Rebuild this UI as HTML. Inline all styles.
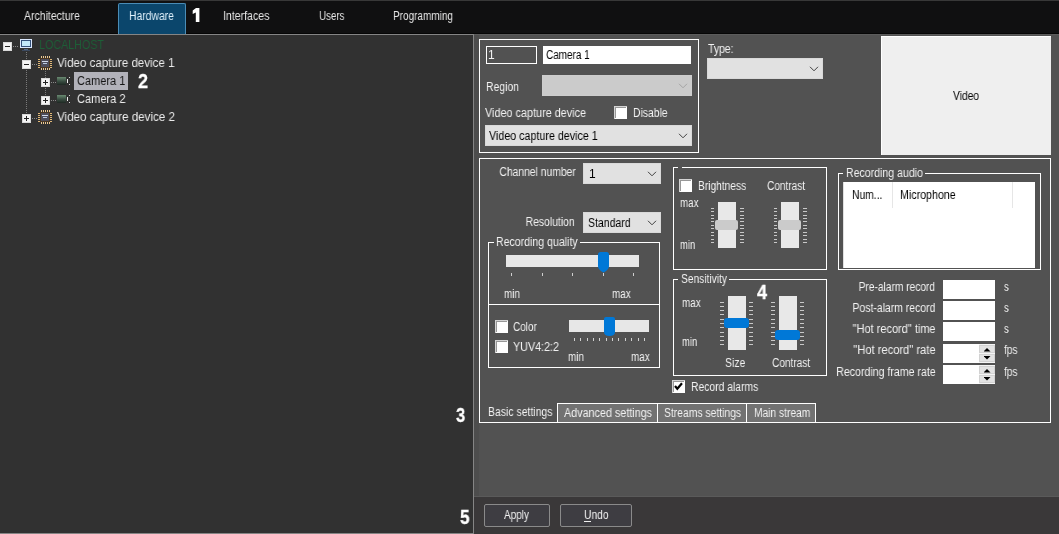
<!DOCTYPE html><html><head><meta charset="utf-8"><style>html,body{margin:0;padding:0;width:1059px;height:534px;overflow:hidden;background:#525252;}body{position:relative;font-family:"Liberation Sans",sans-serif;}.a{position:absolute;}.t{position:absolute;white-space:pre;will-change:transform;}</style></head><body><div class="a" style="left:0px;top:0px;width:1059px;height:1px;background:#383838;"></div>
<div class="a" style="left:0px;top:1px;width:1059px;height:33px;background:#101011;"></div>
<div class="a" style="left:0px;top:33px;width:1059px;height:1px;background:#060606;"></div>
<div class="a" style="left:0px;top:34px;width:474px;height:500px;background:#858585;"></div>
<div class="a" style="left:0px;top:35px;width:473px;height:498px;background:#313131;"></div>
<div class="a" style="left:474px;top:34px;width:585px;height:462px;background:#525252;"></div>
<div class="a" style="left:474px;top:34px;width:585px;height:1px;background:#5c5c5c;"></div>
<div class="a" style="left:474px;top:35px;width:5px;height:461px;background:#4d4d4d;"></div>
<div class="a" style="left:474px;top:496px;width:585px;height:38px;background:#3a3839;"></div>
<div class="a" style="left:118px;top:3px;width:68px;height:31px;background:#0b466c;border:1px solid #4a8cb6;border-bottom:none;box-sizing:border-box;border-radius:2px 2px 0 0;"></div>
<div class="t" style="top:10px;font-size:12px;line-height:12px;color:#e6e6e6;left:24.00px;transform:scaleX(0.8747);transform-origin:0 0;">Architecture</div>
<div class="t" style="top:10px;font-size:12px;line-height:12px;color:#dff0fb;left:129.30px;transform:scaleX(0.8651);transform-origin:0 0;">Hardware</div>
<div class="t" style="top:10px;font-size:12px;line-height:12px;color:#e6e6e6;left:223.00px;transform:scaleX(0.8806);transform-origin:0 0;">Interfaces</div>
<div class="t" style="top:10px;font-size:12px;line-height:12px;color:#e6e6e6;left:318.60px;transform:scaleX(0.8139);transform-origin:0 0;">Users</div>
<div class="t" style="top:10px;font-size:12px;line-height:12px;color:#e6e6e6;left:393.30px;transform:scaleX(0.8331);transform-origin:0 0;">Programming</div>
<svg class="a" style="left:3px;top:42px" width="9" height="9" viewBox="0 0 9 9" shape-rendering="crispEdges"><rect x="0" y="0" width="9" height="9" fill="#d9d9d9"/><rect x="1" y="1" width="7" height="7" fill="#f4f4f4"/><rect x="2" y="4" width="5" height="1" fill="#222"/></svg>
<svg class="a" style="left:13px;top:46px" width="6" height="1" viewBox="0 0 6 1" shape-rendering="crispEdges"><rect x="0" y="0" width="1" height="1" fill="#8a8a8a"/><rect x="2" y="0" width="1" height="1" fill="#8a8a8a"/><rect x="4" y="0" width="1" height="1" fill="#8a8a8a"/></svg>
<svg class="a" style="left:20px;top:39px" width="12" height="12" viewBox="0 0 12 12" shape-rendering="crispEdges"><rect x="0" y="0" width="12" height="9" fill="#dbe9ff"/><rect x="1" y="1" width="10" height="7" fill="#33507a"/><rect x="2" y="2" width="8" height="5" fill="#c2e8fa"/><rect x="4" y="10" width="4" height="1" fill="#556a88"/><rect x="2" y="11" width="8" height="1" fill="#3c4a60"/></svg>
<svg class="a" style="left:26px;top:52px" width="1" height="8" viewBox="0 0 1 8" shape-rendering="crispEdges"><rect x="0" y="0" width="1" height="1" fill="#7a7a7a"/><rect x="0" y="2" width="1" height="1" fill="#7a7a7a"/><rect x="0" y="4" width="1" height="1" fill="#7a7a7a"/><rect x="0" y="6" width="1" height="1" fill="#7a7a7a"/></svg>
<svg class="a" style="left:26px;top:70px" width="1" height="44" viewBox="0 0 1 44" shape-rendering="crispEdges"><rect x="0" y="0" width="1" height="1" fill="#7a7a7a"/><rect x="0" y="2" width="1" height="1" fill="#7a7a7a"/><rect x="0" y="4" width="1" height="1" fill="#7a7a7a"/><rect x="0" y="6" width="1" height="1" fill="#7a7a7a"/><rect x="0" y="8" width="1" height="1" fill="#7a7a7a"/><rect x="0" y="10" width="1" height="1" fill="#7a7a7a"/><rect x="0" y="12" width="1" height="1" fill="#7a7a7a"/><rect x="0" y="14" width="1" height="1" fill="#7a7a7a"/><rect x="0" y="16" width="1" height="1" fill="#7a7a7a"/><rect x="0" y="18" width="1" height="1" fill="#7a7a7a"/><rect x="0" y="20" width="1" height="1" fill="#7a7a7a"/><rect x="0" y="22" width="1" height="1" fill="#7a7a7a"/><rect x="0" y="24" width="1" height="1" fill="#7a7a7a"/><rect x="0" y="26" width="1" height="1" fill="#7a7a7a"/><rect x="0" y="28" width="1" height="1" fill="#7a7a7a"/><rect x="0" y="30" width="1" height="1" fill="#7a7a7a"/><rect x="0" y="32" width="1" height="1" fill="#7a7a7a"/><rect x="0" y="34" width="1" height="1" fill="#7a7a7a"/><rect x="0" y="36" width="1" height="1" fill="#7a7a7a"/><rect x="0" y="38" width="1" height="1" fill="#7a7a7a"/><rect x="0" y="40" width="1" height="1" fill="#7a7a7a"/><rect x="0" y="42" width="1" height="1" fill="#7a7a7a"/></svg>
<svg class="a" style="left:22px;top:60px" width="9" height="9" viewBox="0 0 9 9" shape-rendering="crispEdges"><rect x="0" y="0" width="9" height="9" fill="#d9d9d9"/><rect x="1" y="1" width="7" height="7" fill="#f4f4f4"/><rect x="2" y="4" width="5" height="1" fill="#222"/></svg>
<svg class="a" style="left:32px;top:64px" width="6" height="1" viewBox="0 0 6 1" shape-rendering="crispEdges"><rect x="0" y="0" width="1" height="1" fill="#8a8a8a"/><rect x="2" y="0" width="1" height="1" fill="#8a8a8a"/><rect x="4" y="0" width="1" height="1" fill="#8a8a8a"/></svg>
<svg class="a" style="left:38px;top:56px" width="14" height="14" viewBox="0 0 14 14" shape-rendering="crispEdges"><rect x="3" y="0" width="1" height="2" fill="#ecc890"/><rect x="3" y="12" width="1" height="2" fill="#ecc890"/><rect x="5" y="0" width="1" height="2" fill="#ecc890"/><rect x="5" y="12" width="1" height="2" fill="#ecc890"/><rect x="7" y="0" width="1" height="2" fill="#ecc890"/><rect x="7" y="12" width="1" height="2" fill="#ecc890"/><rect x="9" y="0" width="1" height="2" fill="#ecc890"/><rect x="9" y="12" width="1" height="2" fill="#ecc890"/><rect x="11" y="0" width="1" height="2" fill="#ecc890"/><rect x="11" y="12" width="1" height="2" fill="#ecc890"/><rect x="0" y="3" width="2" height="1" fill="#e0b878"/><rect x="12" y="3" width="2" height="1" fill="#e0b878"/><rect x="0" y="5" width="2" height="1" fill="#e0b878"/><rect x="12" y="5" width="2" height="1" fill="#e0b878"/><rect x="0" y="7" width="2" height="1" fill="#e0b878"/><rect x="12" y="7" width="2" height="1" fill="#e0b878"/><rect x="0" y="9" width="2" height="1" fill="#e0b878"/><rect x="12" y="9" width="2" height="1" fill="#e0b878"/><rect x="0" y="11" width="2" height="1" fill="#e0b878"/><rect x="12" y="11" width="2" height="1" fill="#e0b878"/><rect x="2" y="2" width="10" height="10" fill="#4a3620"/><rect x="3" y="3" width="8" height="8" fill="#4c4c5a"/><rect x="4" y="5" width="6" height="1" fill="#d0d8e8"/><rect x="5" y="7" width="4" height="1" fill="#b8c8e0"/></svg>
<svg class="a" style="left:45px;top:71px" width="1" height="7" viewBox="0 0 1 7" shape-rendering="crispEdges"><rect x="0" y="0" width="1" height="1" fill="#7a7a7a"/><rect x="0" y="2" width="1" height="1" fill="#7a7a7a"/><rect x="0" y="4" width="1" height="1" fill="#7a7a7a"/><rect x="0" y="6" width="1" height="1" fill="#7a7a7a"/></svg>
<svg class="a" style="left:45px;top:88px" width="1" height="8" viewBox="0 0 1 8" shape-rendering="crispEdges"><rect x="0" y="0" width="1" height="1" fill="#7a7a7a"/><rect x="0" y="2" width="1" height="1" fill="#7a7a7a"/><rect x="0" y="4" width="1" height="1" fill="#7a7a7a"/><rect x="0" y="6" width="1" height="1" fill="#7a7a7a"/></svg>
<svg class="a" style="left:41px;top:78px" width="9" height="9" viewBox="0 0 9 9" shape-rendering="crispEdges"><rect x="0" y="0" width="9" height="9" fill="#d9d9d9"/><rect x="1" y="1" width="7" height="7" fill="#f4f4f4"/><rect x="2" y="4" width="5" height="1" fill="#222"/><rect x="4" y="2" width="1" height="5" fill="#222"/></svg>
<svg class="a" style="left:51px;top:82px" width="6" height="1" viewBox="0 0 6 1" shape-rendering="crispEdges"><rect x="0" y="0" width="1" height="1" fill="#8a8a8a"/><rect x="2" y="0" width="1" height="1" fill="#8a8a8a"/><rect x="4" y="0" width="1" height="1" fill="#8a8a8a"/></svg>
<svg class="a" style="left:57px;top:77px" width="13" height="8" viewBox="0 0 13 8" shape-rendering="crispEdges"><defs><linearGradient id="cg" x1="0" y1="0" x2="0" y2="1"><stop offset="0" stop-color="#6a8a72"/><stop offset="0.5" stop-color="#3c5044"/><stop offset="1" stop-color="#1e2822"/></linearGradient></defs><rect x="0" y="0" width="9" height="8" fill="url(#cg)"/><rect x="10" y="2" width="1" height="4" fill="#f0f0f0"/><rect x="12" y="0" width="1" height="1" fill="#d0d0d0"/><rect x="12" y="7" width="1" height="1" fill="#d0d0d0"/></svg>
<svg class="a" style="left:41px;top:96px" width="9" height="9" viewBox="0 0 9 9" shape-rendering="crispEdges"><rect x="0" y="0" width="9" height="9" fill="#d9d9d9"/><rect x="1" y="1" width="7" height="7" fill="#f4f4f4"/><rect x="2" y="4" width="5" height="1" fill="#222"/><rect x="4" y="2" width="1" height="5" fill="#222"/></svg>
<svg class="a" style="left:51px;top:100px" width="6" height="1" viewBox="0 0 6 1" shape-rendering="crispEdges"><rect x="0" y="0" width="1" height="1" fill="#8a8a8a"/><rect x="2" y="0" width="1" height="1" fill="#8a8a8a"/><rect x="4" y="0" width="1" height="1" fill="#8a8a8a"/></svg>
<svg class="a" style="left:57px;top:95px" width="13" height="8" viewBox="0 0 13 8" shape-rendering="crispEdges"><defs><linearGradient id="cg" x1="0" y1="0" x2="0" y2="1"><stop offset="0" stop-color="#6a8a72"/><stop offset="0.5" stop-color="#3c5044"/><stop offset="1" stop-color="#1e2822"/></linearGradient></defs><rect x="0" y="0" width="9" height="8" fill="url(#cg)"/><rect x="10" y="2" width="1" height="4" fill="#f0f0f0"/><rect x="12" y="0" width="1" height="1" fill="#d0d0d0"/><rect x="12" y="7" width="1" height="1" fill="#d0d0d0"/></svg>
<svg class="a" style="left:22px;top:114px" width="9" height="9" viewBox="0 0 9 9" shape-rendering="crispEdges"><rect x="0" y="0" width="9" height="9" fill="#d9d9d9"/><rect x="1" y="1" width="7" height="7" fill="#f4f4f4"/><rect x="2" y="4" width="5" height="1" fill="#222"/><rect x="4" y="2" width="1" height="5" fill="#222"/></svg>
<svg class="a" style="left:32px;top:118px" width="6" height="1" viewBox="0 0 6 1" shape-rendering="crispEdges"><rect x="0" y="0" width="1" height="1" fill="#8a8a8a"/><rect x="2" y="0" width="1" height="1" fill="#8a8a8a"/><rect x="4" y="0" width="1" height="1" fill="#8a8a8a"/></svg>
<svg class="a" style="left:38px;top:110px" width="14" height="14" viewBox="0 0 14 14" shape-rendering="crispEdges"><rect x="3" y="0" width="1" height="2" fill="#ecc890"/><rect x="3" y="12" width="1" height="2" fill="#ecc890"/><rect x="5" y="0" width="1" height="2" fill="#ecc890"/><rect x="5" y="12" width="1" height="2" fill="#ecc890"/><rect x="7" y="0" width="1" height="2" fill="#ecc890"/><rect x="7" y="12" width="1" height="2" fill="#ecc890"/><rect x="9" y="0" width="1" height="2" fill="#ecc890"/><rect x="9" y="12" width="1" height="2" fill="#ecc890"/><rect x="11" y="0" width="1" height="2" fill="#ecc890"/><rect x="11" y="12" width="1" height="2" fill="#ecc890"/><rect x="0" y="3" width="2" height="1" fill="#e0b878"/><rect x="12" y="3" width="2" height="1" fill="#e0b878"/><rect x="0" y="5" width="2" height="1" fill="#e0b878"/><rect x="12" y="5" width="2" height="1" fill="#e0b878"/><rect x="0" y="7" width="2" height="1" fill="#e0b878"/><rect x="12" y="7" width="2" height="1" fill="#e0b878"/><rect x="0" y="9" width="2" height="1" fill="#e0b878"/><rect x="12" y="9" width="2" height="1" fill="#e0b878"/><rect x="0" y="11" width="2" height="1" fill="#e0b878"/><rect x="12" y="11" width="2" height="1" fill="#e0b878"/><rect x="2" y="2" width="10" height="10" fill="#4a3620"/><rect x="3" y="3" width="8" height="8" fill="#4c4c5a"/><rect x="4" y="5" width="6" height="1" fill="#d0d8e8"/><rect x="5" y="7" width="4" height="1" fill="#b8c8e0"/></svg>
<div class="a" style="left:74px;top:72px;width:54px;height:18px;background:#b2b2ba;"></div>
<div class="t" style="top:39px;font-size:12.5px;line-height:12.5px;color:#1e5e37;left:38.70px;transform:scaleX(0.8585);transform-origin:0 0;">LOCALHOST</div>
<div class="t" style="top:57px;font-size:12.5px;line-height:12.5px;color:#ececec;left:57.00px;transform:scaleX(0.9257);transform-origin:0 0;">Video capture device 1</div>
<div class="t" style="top:75px;font-size:12.5px;line-height:12.5px;color:#141414;left:76.80px;transform:scaleX(0.8800);transform-origin:0 0;">Camera 1</div>
<div class="t" style="top:93px;font-size:12.5px;line-height:12.5px;color:#ececec;left:76.80px;transform:scaleX(0.8836);transform-origin:0 0;">Camera 2</div>
<div class="t" style="top:111px;font-size:12.5px;line-height:12.5px;color:#ececec;left:57.00px;transform:scaleX(0.9296);transform-origin:0 0;">Video capture device 2</div>
<div class="t" style="top:71px;font-size:20px;line-height:20px;color:#ffffff;font-weight:bold;left:138.00px;transform:scaleX(0.8993);transform-origin:0 0;-webkit-text-stroke:0.3px #fff;">2</div>
<div class="a" style="left:479px;top:39px;width:220px;height:1px;background:#ffffff;"></div>
<div class="a" style="left:479px;top:152px;width:220px;height:1px;background:#ffffff;"></div>
<div class="a" style="left:479px;top:39px;width:1px;height:114px;background:#ffffff;"></div>
<div class="a" style="left:698px;top:39px;width:1px;height:114px;background:#ffffff;"></div>
<div class="a" style="left:486px;top:46px;width:51px;height:18px;box-sizing:border-box;border:1px solid #ffffff;"></div>
<div class="a" style="left:543px;top:46px;width:148px;height:18px;background:#ffffff;"></div>
<div class="t" style="top:49px;font-size:12px;line-height:12px;color:#f2f2f2;left:488.00px;">1</div>
<div class="t" style="top:49px;font-size:12px;line-height:12px;color:#000000;left:545.50px;transform:scaleX(0.8293);transform-origin:0 0;">Camera 1</div>
<div class="t" style="top:81px;font-size:12px;line-height:12px;color:#f2f2f2;left:485.70px;transform:scaleX(0.8678);transform-origin:0 0;">Region</div>
<div class="a" style="left:542px;top:75px;width:150px;height:21px;background:#cbcbcb;box-sizing:border-box;border:1px solid #cdcdcd;"></div>
<svg class="a" style="left:678px;top:83px" width="10" height="6" viewBox="0 0 10 6"><polyline points="1,0.8 5,4.8 9,0.8" fill="none" stroke="#a4a4a4" stroke-width="1.0"/></svg>
<div class="t" style="top:107px;font-size:12px;line-height:12px;color:#f2f2f2;left:485.20px;transform:scaleX(0.9030);transform-origin:0 0;">Video capture device</div>
<svg class="a" style="left:614px;top:106px" width="13" height="13" viewBox="0 0 13 13" shape-rendering="crispEdges"><rect x="0" y="0" width="13" height="13" fill="#ffffff"/><rect x="0" y="0" width="13" height="1" fill="#d4d4d4"/><rect x="0" y="0" width="1" height="13" fill="#d4d4d4"/><rect x="1" y="1" width="11" height="1" fill="#989898"/><rect x="1" y="1" width="1" height="11" fill="#989898"/></svg>
<div class="t" style="top:107px;font-size:12px;line-height:12px;color:#f2f2f2;left:632.50px;transform:scaleX(0.8646);transform-origin:0 0;">Disable</div>
<div class="a" style="left:485px;top:125px;width:207px;height:21px;background:#e1e1e1;box-sizing:border-box;border:1px solid #d9d9d9;"></div>
<svg class="a" style="left:678px;top:133px" width="10" height="6" viewBox="0 0 10 6"><polyline points="1,0.8 5,4.8 9,0.8" fill="none" stroke="#404040" stroke-width="1.0"/></svg>
<div class="t" style="top:130px;font-size:12px;line-height:12px;color:#000000;left:489.00px;transform:scaleX(0.8920);transform-origin:0 0;">Video capture device 1</div>
<div class="t" style="top:43px;font-size:12px;line-height:12px;color:#f2f2f2;left:708.00px;transform:scaleX(0.8688);transform-origin:0 0;">Type:</div>
<div class="a" style="left:707px;top:58px;width:116px;height:21px;background:#e1e1e1;box-sizing:border-box;border:1px solid #d9d9d9;"></div>
<svg class="a" style="left:809px;top:66px" width="10" height="6" viewBox="0 0 10 6"><polyline points="1,0.8 5,4.8 9,0.8" fill="none" stroke="#404040" stroke-width="1.0"/></svg>
<div class="a" style="left:881px;top:36px;width:170px;height:119px;background:#efefef;box-sizing:border-box;border-top:1px solid #fff;border-left:1px solid #fff;"></div>
<div class="t" style="top:90px;font-size:12px;line-height:12px;color:#000000;left:953.00px;transform:scaleX(0.8530);transform-origin:0 0;">Video</div>
<div class="a" style="left:479px;top:158px;width:572px;height:1px;background:#ffffff;"></div>
<div class="a" style="left:479px;top:422px;width:572px;height:1px;background:#ffffff;"></div>
<div class="a" style="left:479px;top:158px;width:1px;height:265px;background:#ffffff;"></div>
<div class="a" style="left:1050px;top:158px;width:1px;height:265px;background:#ffffff;"></div>
<div class="t" style="top:166px;font-size:12px;line-height:12px;color:#f2f2f2;right:483.00px;transform:scaleX(0.8599);transform-origin:100% 0;">Channel number</div>
<div class="a" style="left:583px;top:163px;width:78px;height:21px;background:#e1e1e1;box-sizing:border-box;border:1px solid #d9d9d9;"></div>
<svg class="a" style="left:647px;top:171px" width="10" height="6" viewBox="0 0 10 6"><polyline points="1,0.8 5,4.8 9,0.8" fill="none" stroke="#404040" stroke-width="1.0"/></svg>
<div class="t" style="top:168px;font-size:12px;line-height:12px;color:#000000;left:588.50px;">1</div>
<div class="t" style="top:216px;font-size:12px;line-height:12px;color:#f2f2f2;right:484.00px;transform:scaleX(0.8660);transform-origin:100% 0;">Resolution</div>
<div class="a" style="left:583px;top:212px;width:78px;height:21px;background:#e1e1e1;box-sizing:border-box;border:1px solid #d9d9d9;"></div>
<svg class="a" style="left:647px;top:220px" width="10" height="6" viewBox="0 0 10 6"><polyline points="1,0.8 5,4.8 9,0.8" fill="none" stroke="#404040" stroke-width="1.0"/></svg>
<div class="t" style="top:217px;font-size:12px;line-height:12px;color:#000000;left:587.70px;transform:scaleX(0.8767);transform-origin:0 0;">Standard</div>
<div class="a" style="left:488px;top:242px;width:172px;height:1px;background:#ffffff;"></div>
<div class="a" style="left:488px;top:304px;width:172px;height:1px;background:#ffffff;"></div>
<div class="a" style="left:488px;top:242px;width:1px;height:63px;background:#ffffff;"></div>
<div class="a" style="left:659px;top:242px;width:1px;height:63px;background:#ffffff;"></div>
<div class="a" style="left:494px;top:242px;width:86px;height:1px;background:#525252;"></div>
<div class="t" style="top:236px;font-size:12px;line-height:12px;color:#f2f2f2;left:495.60px;transform:scaleX(0.8800);transform-origin:0 0;">Recording quality</div>
<div class="a" style="left:506px;top:255px;width:133px;height:12px;background:#e7e7e7;"></div>
<svg class="a" style="left:598px;top:252px" width="11" height="21" viewBox="0 0 11 21" shape-rendering="crispEdges"><path d="M0,2.5 Q0,0 2.5,0 L8.5,0 Q11,0 11,2.5 L11,14 C11,17 8,19.5 5.5,20.5 C3,19.5 0,17 0,14 Z" fill="#0078d7" shape-rendering="geometricPrecision"/></svg>
<svg class="a" style="left:511px;top:273px" width="123" height="3" viewBox="0 0 123 3" shape-rendering="crispEdges"><rect x="0" y="0" width="1" height="3" fill="#d0d0d0"/><rect x="31" y="0" width="1" height="3" fill="#d0d0d0"/><rect x="61" y="0" width="1" height="3" fill="#d0d0d0"/><rect x="92" y="0" width="1" height="3" fill="#d0d0d0"/><rect x="122" y="0" width="1" height="3" fill="#d0d0d0"/></svg>
<div class="t" style="top:288px;font-size:12px;line-height:12px;color:#f2f2f2;left:504.40px;transform:scaleX(0.8173);transform-origin:0 0;">min</div>
<div class="t" style="top:288px;font-size:12px;line-height:12px;color:#f2f2f2;left:612.30px;transform:scaleX(0.8250);transform-origin:0 0;">max</div>
<div class="a" style="left:488px;top:304px;width:172px;height:1px;background:#ffffff;"></div>
<div class="a" style="left:488px;top:367px;width:172px;height:1px;background:#ffffff;"></div>
<div class="a" style="left:488px;top:304px;width:1px;height:64px;background:#ffffff;"></div>
<div class="a" style="left:659px;top:304px;width:1px;height:64px;background:#ffffff;"></div>
<svg class="a" style="left:495px;top:320px" width="13" height="13" viewBox="0 0 13 13" shape-rendering="crispEdges"><rect x="0" y="0" width="13" height="13" fill="#ffffff"/><rect x="0" y="0" width="13" height="1" fill="#d4d4d4"/><rect x="0" y="0" width="1" height="13" fill="#d4d4d4"/><rect x="1" y="1" width="11" height="1" fill="#989898"/><rect x="1" y="1" width="1" height="11" fill="#989898"/></svg>
<div class="t" style="top:321px;font-size:12px;line-height:12px;color:#f2f2f2;left:513.20px;transform:scaleX(0.8298);transform-origin:0 0;">Color</div>
<svg class="a" style="left:495px;top:340px" width="13" height="13" viewBox="0 0 13 13" shape-rendering="crispEdges"><rect x="0" y="0" width="13" height="13" fill="#ffffff"/><rect x="0" y="0" width="13" height="1" fill="#d4d4d4"/><rect x="0" y="0" width="1" height="13" fill="#d4d4d4"/><rect x="1" y="1" width="11" height="1" fill="#989898"/><rect x="1" y="1" width="1" height="11" fill="#989898"/></svg>
<div class="t" style="top:341px;font-size:12px;line-height:12px;color:#f2f2f2;left:513.20px;transform:scaleX(0.8937);transform-origin:0 0;">YUV4:2:2</div>
<div class="a" style="left:569px;top:320px;width:80px;height:12px;background:#e7e7e7;"></div>
<svg class="a" style="left:604px;top:317px" width="11" height="19" viewBox="0 0 11 19" shape-rendering="crispEdges"><path d="M0,2 Q0,0 2,0 L9,0 Q11,0 11,2 L11,15 Q11,19 5.5,19 Q0,19 0,15 Z" fill="#0078d7" shape-rendering="geometricPrecision"/></svg>
<svg class="a" style="left:574px;top:338px" width="71" height="3" viewBox="0 0 71 3" shape-rendering="crispEdges"><rect x="0" y="0" width="1" height="3" fill="#d0d0d0"/><rect x="6" y="0" width="1" height="3" fill="#d0d0d0"/><rect x="13" y="0" width="1" height="3" fill="#d0d0d0"/><rect x="19" y="0" width="1" height="3" fill="#d0d0d0"/><rect x="25" y="0" width="1" height="3" fill="#d0d0d0"/><rect x="32" y="0" width="1" height="3" fill="#d0d0d0"/><rect x="38" y="0" width="1" height="3" fill="#d0d0d0"/><rect x="44" y="0" width="1" height="3" fill="#d0d0d0"/><rect x="51" y="0" width="1" height="3" fill="#d0d0d0"/><rect x="57" y="0" width="1" height="3" fill="#d0d0d0"/><rect x="64" y="0" width="1" height="3" fill="#d0d0d0"/><rect x="70" y="0" width="1" height="3" fill="#d0d0d0"/></svg>
<div class="t" style="top:351px;font-size:12px;line-height:12px;color:#f2f2f2;left:567.60px;transform:scaleX(0.8173);transform-origin:0 0;">min</div>
<div class="t" style="top:351px;font-size:12px;line-height:12px;color:#f2f2f2;left:630.50px;transform:scaleX(0.8250);transform-origin:0 0;">max</div>
<div class="a" style="left:673px;top:167px;width:154px;height:1px;background:#ffffff;"></div>
<div class="a" style="left:673px;top:269px;width:154px;height:1px;background:#ffffff;"></div>
<div class="a" style="left:673px;top:167px;width:1px;height:103px;background:#ffffff;"></div>
<div class="a" style="left:826px;top:167px;width:1px;height:103px;background:#ffffff;"></div>
<div class="a" style="left:678px;top:167px;width:4px;height:1px;background:#525252;"></div>
<svg class="a" style="left:679px;top:179px" width="13" height="13" viewBox="0 0 13 13" shape-rendering="crispEdges"><rect x="0" y="0" width="13" height="13" fill="#ffffff"/><rect x="0" y="0" width="13" height="1" fill="#d4d4d4"/><rect x="0" y="0" width="1" height="13" fill="#d4d4d4"/><rect x="1" y="1" width="11" height="1" fill="#989898"/><rect x="1" y="1" width="1" height="11" fill="#989898"/></svg>
<div class="t" style="top:180px;font-size:12px;line-height:12px;color:#f2f2f2;left:697.80px;transform:scaleX(0.8501);transform-origin:0 0;">Brightness</div>
<div class="t" style="top:180px;font-size:12px;line-height:12px;color:#f2f2f2;left:766.50px;transform:scaleX(0.8402);transform-origin:0 0;">Contrast</div>
<div class="t" style="top:197px;font-size:12px;line-height:12px;color:#f2f2f2;left:679.50px;transform:scaleX(0.8161);transform-origin:0 0;">max</div>
<div class="t" style="top:239px;font-size:12px;line-height:12px;color:#f2f2f2;left:679.50px;transform:scaleX(0.7863);transform-origin:0 0;">min</div>
<div class="a" style="left:718px;top:202px;width:18px;height:46px;background:#e8e8e8;"></div>
<div class="a" style="left:715px;top:220px;width:23px;height:10px;background:#cbcbcb;border-radius:2px;"></div>
<svg class="a" style="left:711px;top:208px" width="3" height="35" viewBox="0 0 3 35" shape-rendering="crispEdges"><rect x="0" y="0" width="3" height="1" fill="#c8c8c8"/><rect x="0" y="3" width="3" height="1" fill="#c8c8c8"/><rect x="0" y="7" width="3" height="1" fill="#c8c8c8"/><rect x="0" y="10" width="3" height="1" fill="#c8c8c8"/><rect x="0" y="13" width="3" height="1" fill="#c8c8c8"/><rect x="0" y="17" width="3" height="1" fill="#c8c8c8"/><rect x="0" y="20" width="3" height="1" fill="#c8c8c8"/><rect x="0" y="24" width="3" height="1" fill="#c8c8c8"/><rect x="0" y="27" width="3" height="1" fill="#c8c8c8"/><rect x="0" y="31" width="3" height="1" fill="#c8c8c8"/><rect x="0" y="34" width="3" height="1" fill="#c8c8c8"/></svg>
<svg class="a" style="left:740px;top:208px" width="4" height="35" viewBox="0 0 4 35" shape-rendering="crispEdges"><rect x="0" y="0" width="4" height="1" fill="#c8c8c8"/><rect x="0" y="3" width="4" height="1" fill="#c8c8c8"/><rect x="0" y="7" width="4" height="1" fill="#c8c8c8"/><rect x="0" y="10" width="4" height="1" fill="#c8c8c8"/><rect x="0" y="13" width="4" height="1" fill="#c8c8c8"/><rect x="0" y="17" width="4" height="1" fill="#c8c8c8"/><rect x="0" y="20" width="4" height="1" fill="#c8c8c8"/><rect x="0" y="24" width="4" height="1" fill="#c8c8c8"/><rect x="0" y="27" width="4" height="1" fill="#c8c8c8"/><rect x="0" y="31" width="4" height="1" fill="#c8c8c8"/><rect x="0" y="34" width="4" height="1" fill="#c8c8c8"/></svg>
<div class="a" style="left:781px;top:202px;width:18px;height:46px;background:#e8e8e8;"></div>
<div class="a" style="left:778px;top:220px;width:23px;height:10px;background:#cbcbcb;border-radius:2px;"></div>
<svg class="a" style="left:774px;top:208px" width="3" height="35" viewBox="0 0 3 35" shape-rendering="crispEdges"><rect x="0" y="0" width="3" height="1" fill="#c8c8c8"/><rect x="0" y="3" width="3" height="1" fill="#c8c8c8"/><rect x="0" y="7" width="3" height="1" fill="#c8c8c8"/><rect x="0" y="10" width="3" height="1" fill="#c8c8c8"/><rect x="0" y="13" width="3" height="1" fill="#c8c8c8"/><rect x="0" y="17" width="3" height="1" fill="#c8c8c8"/><rect x="0" y="20" width="3" height="1" fill="#c8c8c8"/><rect x="0" y="24" width="3" height="1" fill="#c8c8c8"/><rect x="0" y="27" width="3" height="1" fill="#c8c8c8"/><rect x="0" y="31" width="3" height="1" fill="#c8c8c8"/><rect x="0" y="34" width="3" height="1" fill="#c8c8c8"/></svg>
<svg class="a" style="left:803px;top:208px" width="4" height="35" viewBox="0 0 4 35" shape-rendering="crispEdges"><rect x="0" y="0" width="4" height="1" fill="#c8c8c8"/><rect x="0" y="3" width="4" height="1" fill="#c8c8c8"/><rect x="0" y="7" width="4" height="1" fill="#c8c8c8"/><rect x="0" y="10" width="4" height="1" fill="#c8c8c8"/><rect x="0" y="13" width="4" height="1" fill="#c8c8c8"/><rect x="0" y="17" width="4" height="1" fill="#c8c8c8"/><rect x="0" y="20" width="4" height="1" fill="#c8c8c8"/><rect x="0" y="24" width="4" height="1" fill="#c8c8c8"/><rect x="0" y="27" width="4" height="1" fill="#c8c8c8"/><rect x="0" y="31" width="4" height="1" fill="#c8c8c8"/><rect x="0" y="34" width="4" height="1" fill="#c8c8c8"/></svg>
<div class="a" style="left:673px;top:279px;width:154px;height:1px;background:#ffffff;"></div>
<div class="a" style="left:673px;top:375px;width:154px;height:1px;background:#ffffff;"></div>
<div class="a" style="left:673px;top:279px;width:1px;height:97px;background:#ffffff;"></div>
<div class="a" style="left:826px;top:279px;width:1px;height:97px;background:#ffffff;"></div>
<div class="a" style="left:678px;top:279px;width:51px;height:1px;background:#525252;"></div>
<div class="t" style="top:273px;font-size:12px;line-height:12px;color:#f2f2f2;left:680.80px;transform:scaleX(0.8517);transform-origin:0 0;">Sensitivity</div>
<div class="t" style="top:297px;font-size:12px;line-height:12px;color:#f2f2f2;left:682.30px;transform:scaleX(0.8250);transform-origin:0 0;">max</div>
<div class="t" style="top:336px;font-size:12px;line-height:12px;color:#f2f2f2;left:682.30px;transform:scaleX(0.7863);transform-origin:0 0;">min</div>
<div class="t" style="top:282px;font-size:20px;line-height:20px;color:#ffffff;font-weight:bold;left:757.00px;transform:scaleX(0.8993);transform-origin:0 0;-webkit-text-stroke:0.3px #fff;">4</div>
<div class="a" style="left:728px;top:296px;width:18px;height:54px;background:#e8e8e8;"></div>
<div class="a" style="left:724px;top:318px;width:25px;height:10px;background:#0078d7;border-radius:3px;"></div>
<svg class="a" style="left:720px;top:302px" width="4" height="43" viewBox="0 0 4 43" shape-rendering="crispEdges"><rect x="0" y="0" width="4" height="1" fill="#c8c8c8"/><rect x="0" y="4" width="4" height="1" fill="#c8c8c8"/><rect x="0" y="8" width="4" height="1" fill="#c8c8c8"/><rect x="0" y="12" width="4" height="1" fill="#c8c8c8"/><rect x="0" y="17" width="4" height="1" fill="#c8c8c8"/><rect x="0" y="21" width="4" height="1" fill="#c8c8c8"/><rect x="0" y="25" width="4" height="1" fill="#c8c8c8"/><rect x="0" y="30" width="4" height="1" fill="#c8c8c8"/><rect x="0" y="34" width="4" height="1" fill="#c8c8c8"/><rect x="0" y="38" width="4" height="1" fill="#c8c8c8"/><rect x="0" y="42" width="4" height="1" fill="#c8c8c8"/></svg>
<svg class="a" style="left:749px;top:302px" width="4" height="43" viewBox="0 0 4 43" shape-rendering="crispEdges"><rect x="0" y="0" width="4" height="1" fill="#c8c8c8"/><rect x="0" y="4" width="4" height="1" fill="#c8c8c8"/><rect x="0" y="8" width="4" height="1" fill="#c8c8c8"/><rect x="0" y="12" width="4" height="1" fill="#c8c8c8"/><rect x="0" y="17" width="4" height="1" fill="#c8c8c8"/><rect x="0" y="21" width="4" height="1" fill="#c8c8c8"/><rect x="0" y="25" width="4" height="1" fill="#c8c8c8"/><rect x="0" y="30" width="4" height="1" fill="#c8c8c8"/><rect x="0" y="34" width="4" height="1" fill="#c8c8c8"/><rect x="0" y="38" width="4" height="1" fill="#c8c8c8"/><rect x="0" y="42" width="4" height="1" fill="#c8c8c8"/></svg>
<div class="a" style="left:779px;top:296px;width:18px;height:54px;background:#e8e8e8;"></div>
<div class="a" style="left:775px;top:330px;width:25px;height:10px;background:#0078d7;border-radius:3px;"></div>
<svg class="a" style="left:771px;top:302px" width="4" height="43" viewBox="0 0 4 43" shape-rendering="crispEdges"><rect x="0" y="0" width="4" height="1" fill="#c8c8c8"/><rect x="0" y="4" width="4" height="1" fill="#c8c8c8"/><rect x="0" y="8" width="4" height="1" fill="#c8c8c8"/><rect x="0" y="12" width="4" height="1" fill="#c8c8c8"/><rect x="0" y="17" width="4" height="1" fill="#c8c8c8"/><rect x="0" y="21" width="4" height="1" fill="#c8c8c8"/><rect x="0" y="25" width="4" height="1" fill="#c8c8c8"/><rect x="0" y="30" width="4" height="1" fill="#c8c8c8"/><rect x="0" y="34" width="4" height="1" fill="#c8c8c8"/><rect x="0" y="38" width="4" height="1" fill="#c8c8c8"/><rect x="0" y="42" width="4" height="1" fill="#c8c8c8"/></svg>
<svg class="a" style="left:800px;top:302px" width="4" height="43" viewBox="0 0 4 43" shape-rendering="crispEdges"><rect x="0" y="0" width="4" height="1" fill="#c8c8c8"/><rect x="0" y="4" width="4" height="1" fill="#c8c8c8"/><rect x="0" y="8" width="4" height="1" fill="#c8c8c8"/><rect x="0" y="12" width="4" height="1" fill="#c8c8c8"/><rect x="0" y="17" width="4" height="1" fill="#c8c8c8"/><rect x="0" y="21" width="4" height="1" fill="#c8c8c8"/><rect x="0" y="25" width="4" height="1" fill="#c8c8c8"/><rect x="0" y="30" width="4" height="1" fill="#c8c8c8"/><rect x="0" y="34" width="4" height="1" fill="#c8c8c8"/><rect x="0" y="38" width="4" height="1" fill="#c8c8c8"/><rect x="0" y="42" width="4" height="1" fill="#c8c8c8"/></svg>
<div class="t" style="top:357px;font-size:12px;line-height:12px;color:#f2f2f2;left:725.00px;transform:scaleX(0.8698);transform-origin:0 0;">Size</div>
<div class="t" style="top:357px;font-size:12px;line-height:12px;color:#f2f2f2;left:771.80px;transform:scaleX(0.8424);transform-origin:0 0;">Contrast</div>
<svg class="a" style="left:672px;top:380px" width="13" height="13" viewBox="0 0 13 13" shape-rendering="crispEdges"><rect x="0" y="0" width="13" height="13" fill="#ffffff"/><rect x="0" y="0" width="13" height="1" fill="#d4d4d4"/><rect x="0" y="0" width="1" height="13" fill="#d4d4d4"/><rect x="1" y="1" width="11" height="1" fill="#989898"/><rect x="1" y="1" width="1" height="11" fill="#989898"/><polyline points="3,6 5.3,8.8 10,3.2" fill="none" stroke="#000" stroke-width="2.2" shape-rendering="geometricPrecision"/></svg>
<div class="t" style="top:381px;font-size:12px;line-height:12px;color:#f2f2f2;left:690.50px;transform:scaleX(0.8626);transform-origin:0 0;">Record alarms</div>
<div class="a" style="left:838px;top:173px;width:203px;height:1px;background:#ffffff;"></div>
<div class="a" style="left:838px;top:269px;width:203px;height:1px;background:#ffffff;"></div>
<div class="a" style="left:838px;top:173px;width:1px;height:97px;background:#ffffff;"></div>
<div class="a" style="left:1040px;top:173px;width:1px;height:97px;background:#ffffff;"></div>
<div class="a" style="left:843px;top:173px;width:82px;height:1px;background:#525252;"></div>
<div class="t" style="top:167px;font-size:12px;line-height:12px;color:#f2f2f2;left:845.70px;transform:scaleX(0.8799);transform-origin:0 0;">Recording audio</div>
<div class="a" style="left:843px;top:182px;width:192px;height:86px;background:#ffffff;"></div>
<div class="a" style="left:843px;top:182px;width:1px;height:86px;background:#e0e0e0;"></div>
<div class="a" style="left:892px;top:182px;width:1px;height:26px;background:#e6e6e6;"></div>
<div class="a" style="left:1012px;top:182px;width:1px;height:26px;background:#e6e6e6;"></div>
<div class="t" style="top:189px;font-size:12px;line-height:12px;color:#000000;left:852.00px;transform:scaleX(0.8602);transform-origin:0 0;">Num...</div>
<div class="t" style="top:189px;font-size:12px;line-height:12px;color:#000000;left:899.70px;transform:scaleX(0.8884);transform-origin:0 0;">Microphone</div>
<div class="t" style="top:281px;font-size:12px;line-height:12px;color:#f2f2f2;right:123.50px;transform:scaleX(0.8487);transform-origin:100% 0;">Pre-alarm record</div>
<div class="a" style="left:943px;top:280px;width:52px;height:19px;background:#ffffff;"></div>
<div class="t" style="top:281px;font-size:12px;line-height:12px;color:#f2f2f2;left:1003.70px;transform:scaleX(0.7667);transform-origin:0 0;">s</div>
<div class="t" style="top:302px;font-size:12px;line-height:12px;color:#f2f2f2;right:123.50px;transform:scaleX(0.8693);transform-origin:100% 0;">Post-alarm record</div>
<div class="a" style="left:943px;top:301px;width:52px;height:19px;background:#ffffff;"></div>
<div class="t" style="top:302px;font-size:12px;line-height:12px;color:#f2f2f2;left:1003.70px;transform:scaleX(0.7667);transform-origin:0 0;">s</div>
<div class="t" style="top:323px;font-size:12px;line-height:12px;color:#f2f2f2;right:123.50px;transform:scaleX(0.9156);transform-origin:100% 0;">"Hot record" time</div>
<div class="a" style="left:943px;top:322px;width:52px;height:19px;background:#ffffff;"></div>
<div class="t" style="top:323px;font-size:12px;line-height:12px;color:#f2f2f2;left:1003.70px;transform:scaleX(0.7667);transform-origin:0 0;">s</div>
<div class="t" style="top:344px;font-size:12px;line-height:12px;color:#f2f2f2;right:123.50px;transform:scaleX(0.9283);transform-origin:100% 0;">"Hot record" rate</div>
<div class="a" style="left:943px;top:344px;width:52px;height:19px;background:#ffffff;"></div>
<div class="t" style="top:344px;font-size:12px;line-height:12px;color:#f2f2f2;left:1003.70px;transform:scaleX(0.8433);transform-origin:0 0;">fps</div>
<div class="a" style="left:979px;top:344px;width:16px;height:19px;background:#f4f4f4;"></div>
<div class="a" style="left:979px;top:345px;width:16px;height:8px;background:#e2e2e2;box-sizing:border-box;border:1px solid #d2d2d2;"></div>
<div class="a" style="left:979px;top:354px;width:16px;height:8px;background:#e2e2e2;box-sizing:border-box;border:1px solid #d2d2d2;"></div>
<svg class="a" style="left:984px;top:348px" width="7" height="4" viewBox="0 0 7 4" shape-rendering="crispEdges"><polygon points="3,0 6.5,3.5 -0.5,3.5" fill="#000" shape-rendering="geometricPrecision"/></svg>
<svg class="a" style="left:984px;top:356px" width="7" height="4" viewBox="0 0 7 4" shape-rendering="crispEdges"><polygon points="-0.5,0 6.5,0 3,3.5" fill="#000" shape-rendering="geometricPrecision"/></svg>
<div class="t" style="top:366px;font-size:12px;line-height:12px;color:#f2f2f2;right:123.50px;transform:scaleX(0.8827);transform-origin:100% 0;">Recording frame rate</div>
<div class="a" style="left:943px;top:365px;width:52px;height:19px;background:#ffffff;"></div>
<div class="t" style="top:366px;font-size:12px;line-height:12px;color:#f2f2f2;left:1003.70px;transform:scaleX(0.8433);transform-origin:0 0;">fps</div>
<div class="a" style="left:979px;top:365px;width:16px;height:19px;background:#f4f4f4;"></div>
<div class="a" style="left:979px;top:366px;width:16px;height:8px;background:#e2e2e2;box-sizing:border-box;border:1px solid #d2d2d2;"></div>
<div class="a" style="left:979px;top:375px;width:16px;height:8px;background:#e2e2e2;box-sizing:border-box;border:1px solid #d2d2d2;"></div>
<svg class="a" style="left:984px;top:369px" width="7" height="4" viewBox="0 0 7 4" shape-rendering="crispEdges"><polygon points="3,0 6.5,3.5 -0.5,3.5" fill="#000" shape-rendering="geometricPrecision"/></svg>
<svg class="a" style="left:984px;top:377px" width="7" height="4" viewBox="0 0 7 4" shape-rendering="crispEdges"><polygon points="-0.5,0 6.5,0 3,3.5" fill="#000" shape-rendering="geometricPrecision"/></svg>
<div class="t" style="top:406px;font-size:12px;line-height:12px;color:#f2f2f2;left:487.70px;transform:scaleX(0.8713);transform-origin:0 0;">Basic settings</div>
<div class="a" style="left:557px;top:403px;width:259px;height:19px;background:#727272;"></div>
<div class="a" style="left:557px;top:403px;width:259px;height:1px;background:#ffffff;"></div>
<div class="a" style="left:557px;top:403px;width:1px;height:19px;background:#ffffff;"></div>
<div class="a" style="left:657px;top:403px;width:1px;height:19px;background:#ffffff;"></div>
<div class="a" style="left:746px;top:403px;width:1px;height:19px;background:#ffffff;"></div>
<div class="a" style="left:815px;top:403px;width:1px;height:19px;background:#ffffff;"></div>
<div class="t" style="top:407px;font-size:12px;line-height:12px;color:#f2f2f2;left:563.90px;transform:scaleX(0.8974);transform-origin:0 0;">Advanced settings</div>
<div class="t" style="top:407px;font-size:12px;line-height:12px;color:#f2f2f2;left:664.40px;transform:scaleX(0.8628);transform-origin:0 0;">Streams settings</div>
<div class="t" style="top:407px;font-size:12px;line-height:12px;color:#f2f2f2;left:753.70px;transform:scaleX(0.8527);transform-origin:0 0;">Main stream</div>
<div class="a" style="left:474px;top:496px;width:585px;height:1px;background:#5a5a5a;"></div>
<div class="a" style="left:484px;top:504px;width:66px;height:23px;background:#3e3d42;box-sizing:border-box;border:1px solid #8a8a8a;border-radius:2px;"></div>
<div class="t" style="top:509px;font-size:12px;line-height:12px;color:#f2f2f2;left:504.20px;transform:scaleX(0.8330);transform-origin:0 0;">Apply</div>
<div class="a" style="left:560px;top:504px;width:72px;height:23px;background:#3e3d42;box-sizing:border-box;border:1px solid #8a8a8a;border-radius:2px;"></div>
<div class="t" style="top:509px;font-size:12px;line-height:12px;color:#f2f2f2;left:583.50px;transform:scaleX(0.8574);transform-origin:0 0;">Undo</div>
<div class="a" style="left:583.5px;top:521px;width:7px;height:1px;background:#f2f2f2;"></div>
<div class="t" style="top:405px;font-size:20px;line-height:20px;color:#ffffff;font-weight:bold;left:455.80px;transform:scaleX(0.8273);transform-origin:0 0;-webkit-text-stroke:0.3px #fff;">3</div>
<div class="t" style="top:507px;font-size:20px;line-height:20px;color:#ffffff;font-weight:bold;left:459.60px;transform:scaleX(0.8633);transform-origin:0 0;-webkit-text-stroke:0.3px #fff;">5</div>
<svg class="a" style="left:192px;top:7px" width="9" height="16" viewBox="0 0 9 16" shape-rendering="crispEdges"><polygon points="4,1 7.4,1 7.4,15 3.8,15 3.8,5.5 0.7,7 0.7,3.6" fill="#fff" shape-rendering="geometricPrecision"/></svg></body></html>
